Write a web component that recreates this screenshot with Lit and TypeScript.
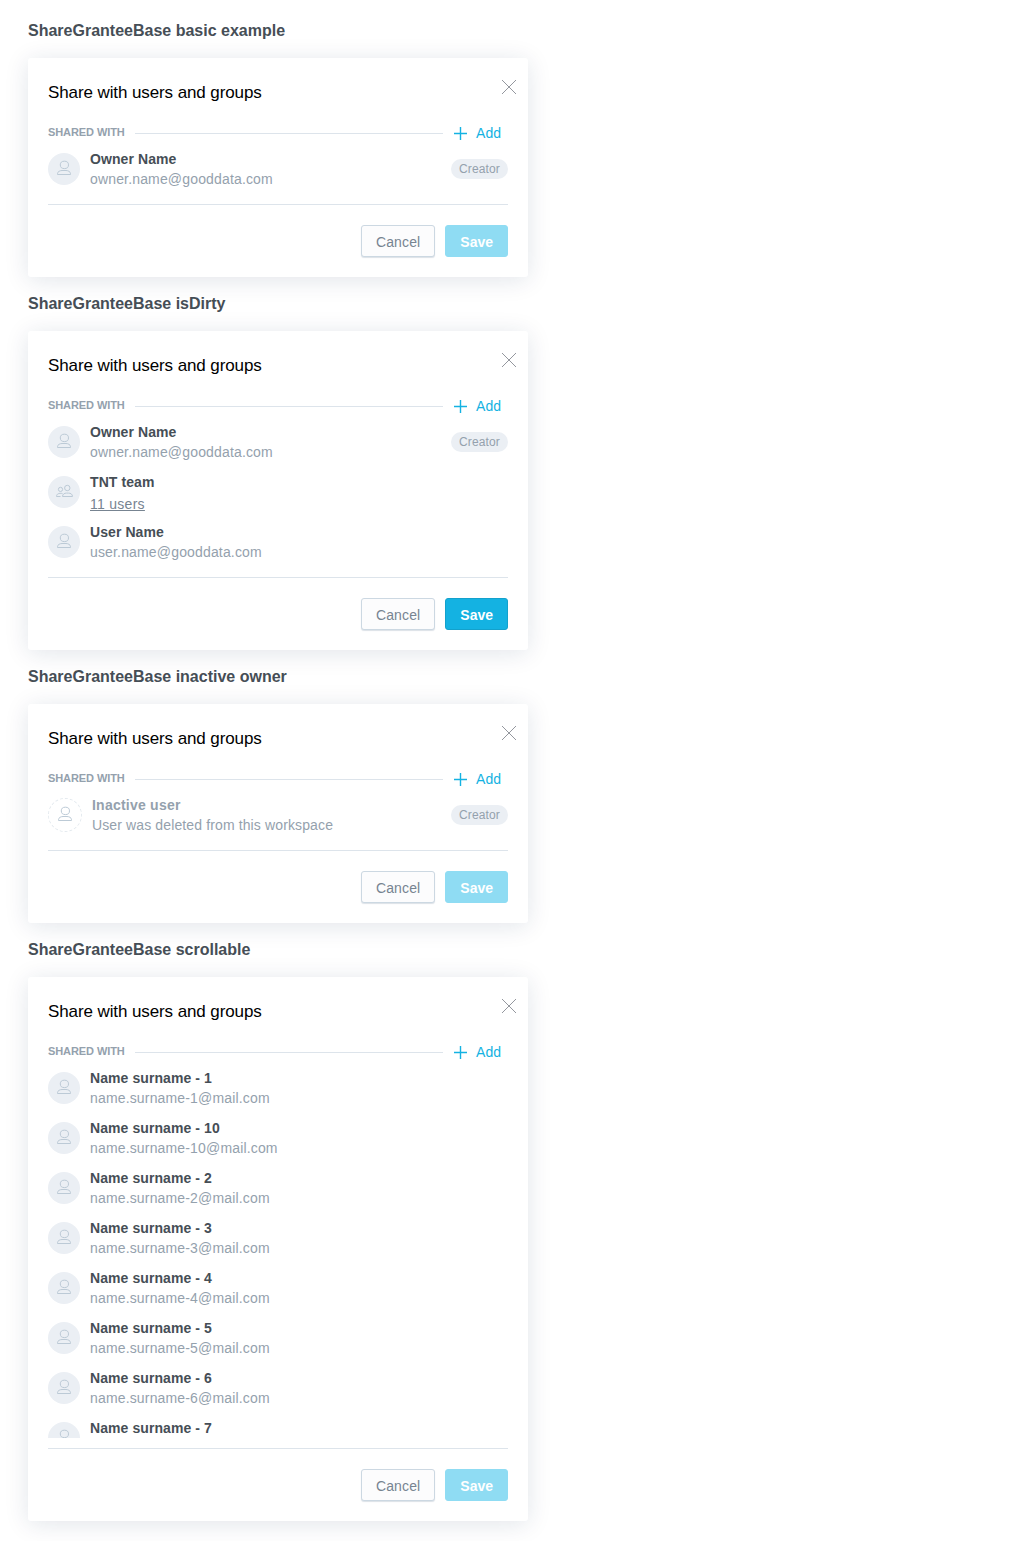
import { LitElement, html, css, svg } from "lit";
import { customElement, property } from "lit/decorators.js";

interface Grantee {
  name: string;
  detail: string;
  kind?: "user" | "group" | "inactive";
  creator?: boolean;
}

interface Example {
  title: string;
  dirty?: boolean;
  grantees: Grantee[];
}

const owner: Grantee = { name: "Owner Name", detail: "owner.name@gooddata.com", creator: true };

const examples: Example[] = [
  { title: "basic example", grantees: [owner] },
  {
    title: "isDirty",
    dirty: true,
    grantees: [
      owner,
      { name: "TNT team", detail: "11 users", kind: "group" },
      { name: "User Name", detail: "user.name@gooddata.com" },
    ],
  },
  {
    title: "inactive owner",
    grantees: [
      { name: "Inactive user", detail: "User was deleted from this workspace", kind: "inactive", creator: true },
    ],
  },
  {
    title: "scrollable",
    grantees: [1, 10, 2, 3, 4, 5, 6, 7].map((n) => ({
      name: `Name surname - ${n}`,
      detail: `name.surname-${n}@mail.com`,
    })),
  },
];

const userIcon = svg`
  <ellipse cx="8.400" cy="4.900" rx="4.100" ry="3.700"/>
  <path d="M1.500 14.500V13.700C1.500 11.600 4 10.500 6 10.500H10C12 10.500 14.500 11.600 14.500 13.700V14.500Z"/>`;

const groupIcon = svg`
  <circle cx="12.300" cy="4" r="2.700"/>
  <path d="M7.500 12.500C7.500 10.100 9.500 9.100 11.500 9.100H13.500C15.500 9.100 17.500 10.100 17.500 12.500Z"/>
  <circle cx="5.500" cy="5.400" r="2.100"/>
  <path d="M7.500 9.500C4 8.900 1.500 9.800 1.500 12.500H5.500"/>`;

@customElement("grantee-row")
class GranteeRow extends LitElement {
  @property({ attribute: false }) grantee!: Grantee;

  static styles = css`
    :host {
      display: flex;
      align-items: center;
      height: 50px;
      flex: none;
    }
    .avatar {
      display: flex;
      align-items: center;
      justify-content: center;
      width: 32px;
      height: 32px;
      border-radius: 50%;
      background: #ebeff4;
      margin-right: 10px;
      flex: none;
    }
    .avatar.inactive {
      background: none;
      border: 1px dashed #e4eaef;
    }
    svg {
      display: block;
      fill: none;
      stroke: #bccad6;
      stroke-width: 1;
      margin-bottom: 2px;
    }
    .text {
      flex: 1;
      display: flex;
      flex-direction: column;
      height: 40px;
      line-height: 20px;
      white-space: nowrap;
    }
    .name {
      font-weight: 700;
      color: #464e56;
      letter-spacing: 0.08px;
    }
    .inactive .name {
      color: #94a1ad;
      letter-spacing: 0.23px;
    }
    .detail {
      color: #94a1ad;
      letter-spacing: 0.16px;
    }
    .inactive .detail {
      letter-spacing: 0.125px;
    }
    .group .detail {
      align-self: flex-start;
      margin-top: 2px;
      color: #778491;
      letter-spacing: 0.28px;
      text-decoration: underline;
    }
    .badge {
      font-size: 12px;
      line-height: 20px;
      height: 20px;
      padding: 0 8px;
      border-radius: 10px;
      background: #ebeff4;
      color: #94a1ad;
      letter-spacing: 0.14px;
    }
  `;

  render() {
    const { name, detail, kind = "user", creator } = this.grantee;
    return html`
      <div class="avatar ${kind}">
        ${kind === "group"
          ? html`<svg width="18" height="14" viewBox="0 0 18 14">${groupIcon}</svg>`
          : html`<svg width="16" height="16" viewBox="0 0 16 16">${userIcon}</svg>`}
      </div>
      <div class="text ${kind}">
        <span class="name">${name}</span>
        <span class="detail">${detail}</span>
      </div>
      ${creator ? html`<span class="badge">Creator</span>` : null}
    `;
  }
}

@customElement("share-dialog")
class ShareDialog extends LitElement {
  @property({ type: Boolean }) dirty = false;
  @property({ attribute: false }) grantees: Grantee[] = [];

  static styles = css`
    :host {
      display: block;
      position: relative;
      box-sizing: border-box;
      width: 500px;
      padding: 20px;
      border-radius: 3px;
      background: #fff;
      box-shadow: 0 3px 25px rgba(20, 38, 80, 0.12);
    }
    button {
      font: inherit;
      margin: 0;
      border: 0;
      background: none;
    }
    .close {
      position: absolute;
      top: 21px;
      right: 11px;
      padding: 0;
    }
    .close svg {
      display: block;
      stroke: #94979e;
    }
    .title {
      margin: 0;
      padding: 1px 0 15px;
      font-size: 17px;
      line-height: 28px;
      font-weight: 400;
      letter-spacing: -0.1px;
      color: #000;
    }
    .section {
      display: flex;
      align-items: center;
      height: 22px;
    }
    .label {
      font-size: 11px;
      line-height: 20px;
      padding-bottom: 2px;
      font-weight: 700;
      letter-spacing: -0.08px;
      color: #94a1ad;
    }
    .rule {
      flex: 1;
      height: 1px;
      background: #dde4eb;
      margin: 0 11px 0 10px;
    }
    .add {
      display: flex;
      align-items: center;
      gap: 9px;
      padding: 0 7px 0 0;
      color: #14b2e2;
    }
    .add svg {
      stroke: #14b2e2;
    }
    .list {
      display: flex;
      flex-direction: column;
      max-height: 375px;
      overflow: hidden;
    }
    .footer {
      display: flex;
      justify-content: flex-end;
      gap: 10px;
      margin-top: 10px;
      padding-top: 20px;
      border-top: 1px solid #dde4eb;
    }
    .cancel,
    .save {
      box-sizing: border-box;
      height: 32px;
      padding: 1px 14px 0;
      border: 1px solid #ccd8e2;
      border-radius: 3px;
      line-height: 20px;
    }
    .cancel {
      color: #778491;
      background: #fcfcfd;
      letter-spacing: 0.12px;
      box-shadow: 0 1px 1px 0 rgba(20, 56, 93, 0.15);
    }
    .save {
      color: #fff;
      font-weight: 700;
      background: #14b2e2;
      border-color: #13a1cc;
    }
    .save:disabled {
      background: #8fdcf3;
      border-color: #8fdcf3;
    }
  `;

  render() {
    return html`
      <button class="close">
        <svg width="16" height="16" viewBox="0 0 16 16"><path d="M1 1l14 14M15 1L1 15" /></svg>
      </button>
      <h3 class="title">Share with users and groups</h3>
      <div class="section">
        <span class="label">SHARED WITH</span>
        <span class="rule"></span>
        <button class="add">
          <svg width="13" height="13" viewBox="0 0 13 13" stroke-width="1.4"><path d="M6.500 0v13M0 6.500h13" /></svg>
          <span>Add</span>
        </button>
      </div>
      <div class="list">
        ${this.grantees.map((g) => html`<grantee-row .grantee=${g}></grantee-row>`)}
      </div>
      <div class="footer">
        <button class="cancel">Cancel</button>
        <button class="save" ?disabled=${!this.dirty}>Save</button>
      </div>
    `;
  }
}

@customElement("app-root")
class AppRoot extends LitElement {
  static styles = css`
    :host {
      display: block;
      padding: 4px 28px 20px;
      background: #fff;
      font-family: "Liberation Sans", Arial, sans-serif;
      font-size: 14px;
      color: #464e56;
    }
    .heading {
      box-sizing: border-box;
      height: 54px;
      margin: 0;
      padding-top: 17px;
      font-size: 16px;
      line-height: 20px;
      font-weight: 700;
    }
  `;

  render() {
    return examples.map(
      (e) => html`
        <h2 class="heading">ShareGranteeBase ${e.title}</h2>
        <share-dialog ?dirty=${!!e.dirty} .grantees=${e.grantees}></share-dialog>
      `,
    );
  }
}
